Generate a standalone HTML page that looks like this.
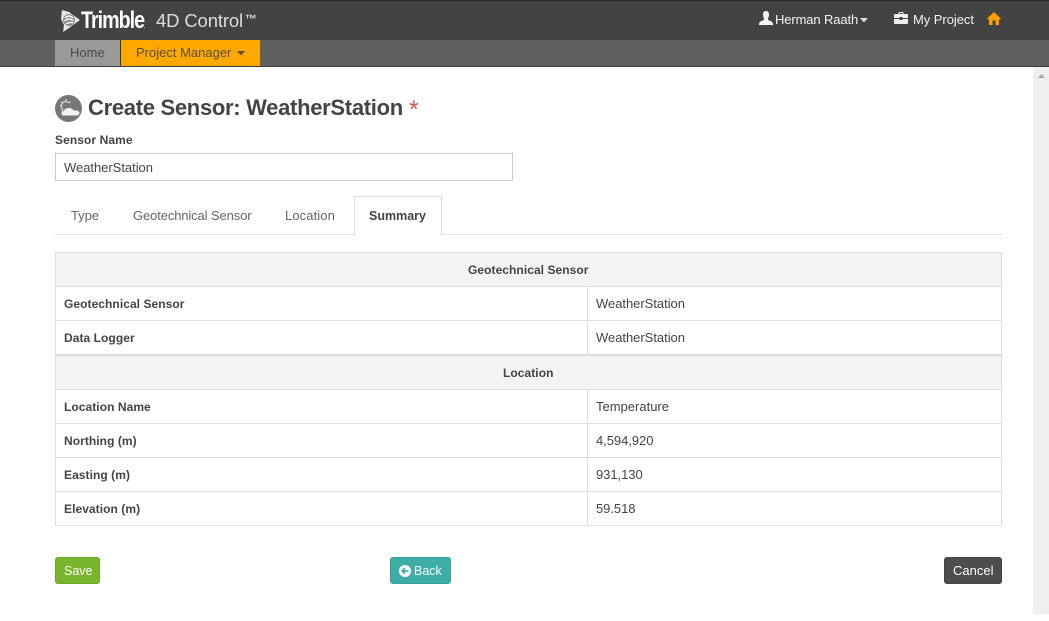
<!DOCTYPE html>
<html><head><meta charset="utf-8"><style>
html,body{margin:0;padding:0;width:1049px;height:621px;overflow:hidden;background:#fff;font-family:"Liberation Sans",sans-serif;color:#444;font-size:13px}
.a{position:absolute;white-space:nowrap}
.b{font-weight:bold}
.line{position:absolute;background:#ddd}
.t{position:absolute;white-space:nowrap;line-height:16px}
</style></head><body>
<div class="a" style="left:0;top:0;width:1049px;height:40px;background:#434343;border-top:1px solid #2a2a2a;box-sizing:border-box"></div>
<div class="a" style="left:0;top:40px;width:1049px;height:26px;background:#606060"></div>
<div class="a" style="left:0;top:66px;width:1049px;height:1px;background:#3a3a3a"></div>
<div class="a" style="left:1033px;top:67px;width:16px;height:547px;background:#efefef"></div>
<svg class="a" style="left:1037px;top:73px" width="10" height="6"><path d="M1 5L4.500 1L8 5Z" fill="#aaa"/></svg>

<svg class="a" style="left:60px;top:9px" width="21" height="24" viewBox="0 0 21 24"><path d="M2 1L9 3L20 11L9 19L3 23L4 16L1 10Z" fill="#e8e8e8"/><circle cx="9" cy="11" r="6" fill="#8a8a8a"/><path d="M5 9Q9 5 13 9M4.500 12Q9 8 13.500 12M6 15Q10 12.500 13 14" stroke="#fff" stroke-width="1.300" fill="none"/></svg>
<div class="a b" style="left:81px;top:8px;font-size:24px;line-height:26px;color:#fff;letter-spacing:-1.2px;transform:scaleX(.82);transform-origin:left">Trimble<span style="font-size:5px;letter-spacing:0">.</span></div>
<div class="a" style="left:156px;top:9px;font-size:18.500px;line-height:24px;color:#ddd;letter-spacing:-.15px">4D Control<span style="font-size:12px;position:relative;top:-4px;margin-left:2px;font-weight:bold">™</span></div>

<svg class="a" style="left:759px;top:11px" width="14" height="14" viewBox="0 0 14 14"><path d="M7 0C9.300 0 10.300 2 10 4.500C9.800 6 9.200 7 8.800 7.700C8.800 9 10 9.400 11.500 10C13 10.600 14 11.300 14 14H0C0 11.300 1 10.600 2.500 10C4 9.400 5.200 9 5.200 7.700C4.800 7 4.200 6 4 4.500C3.700 2 4.700 0 7 0Z" fill="#f5f5f5"/></svg>
<div class="t" style="left:775px;top:12px;color:#f2f2f2;letter-spacing:-.12px">Herman Raath</div>
<svg class="a" style="left:860px;top:18px" width="8" height="5"><path d="M0 0H8L4 4.500Z" fill="#ddd"/></svg>
<svg class="a" style="left:894px;top:12px" width="14" height="12" viewBox="0 0 14 12"><path d="M4.500 2V.8Q4.500 0 5.300 0H8.700Q9.500 0 9.500 .8V2H8.500V1H5.500V2Z" fill="#eee"/><path d="M1 2H13Q14 2 14 3V6H8.500V5H5.500V6H0V3Q0 2 1 2ZM0 7H5.500V8H8.500V7H14V11Q14 12 13 12H1Q0 12 0 11Z" fill="#eee"/></svg>
<div class="t" style="left:913px;top:12px;color:#f2f2f2;letter-spacing:-.05px">My Project</div>
<svg class="a" style="left:987px;top:12px" width="14" height="13" viewBox="0 0 14 13"><path d="M7 0L14 6.800L13 7.500H12V13H8.500V8.500H5.500V13H2V7.500H1L0 6.800Z" fill="#ff9f00"/></svg>

<div class="a" style="left:55px;top:40px;width:65px;height:26px;background:#999"></div>
<div class="t" style="left:70px;top:45px;color:#4a4a4a">Home</div>
<div class="a" style="left:120px;top:40px;width:1px;height:26px;background:#333"></div>
<div class="a" style="left:121px;top:40px;width:139px;height:26px;background:#ffa900"></div>
<div class="t" style="left:136px;top:45px;color:#5a5030">Project Manager</div>
<svg class="a" style="left:237px;top:51px" width="8" height="5"><path d="M0 0H8L4 4.500Z" fill="#5a5030"/></svg>

<svg class="a" style="left:55px;top:95px" width="27" height="27" viewBox="0 0 27 27"><circle cx="13.500" cy="13.500" r="13.500" fill="#777"/><path d="M11 4V6M5 11H7M6.500 6.500L8 8M15.500 6.500L14 8M6.500 15.500L8 14" stroke="#ddd" stroke-width="1.200"/><path d="M7.500 14A4 4 0 0 1 14 8" fill="none" stroke="#ddd" stroke-width="1.200"/><path d="M9 20.500Q6.500 20.500 6.500 18Q6.500 16 9 15.700Q10 13 14 13Q17.500 13 18.500 15.500Q24 15 24.500 18Q24.500 20.500 21.500 20.500Z" fill="#f2f2f2"/></svg>
<div class="a b" style="left:88px;top:94px;font-size:22px;line-height:27px;color:#444;letter-spacing:-.3px">Create Sensor: WeatherStation</div>
<div class="a" style="left:409px;top:97px;font-size:25px;line-height:27px;color:#d9534f">*</div>

<div class="t b" style="left:55px;top:132px;font-size:12px;letter-spacing:.08px">Sensor Name</div>
<div class="a" style="left:55px;top:153px;width:458px;height:28px;border:1px solid #ccc;box-sizing:border-box"></div>
<div class="t" style="left:64px;top:160px;letter-spacing:-.03px">WeatherStation</div>

<div class="t" style="left:71px;top:208px;color:#666;letter-spacing:-.05px">Type</div>
<div class="t" style="left:133px;top:208px;color:#666;letter-spacing:-.12px">Geotechnical Sensor</div>
<div class="t" style="left:285px;top:208px;color:#666;letter-spacing:.1px">Location</div>
<div class="line" style="left:55px;top:234px;width:947px;height:1px"></div>
<div class="a" style="left:354px;top:196px;width:88px;height:39px;background:#fff;border:1px solid #ddd;border-bottom:0;box-sizing:border-box"></div>
<div class="t b" style="left:369px;top:208px;font-size:12.500px">Summary</div>

<div class="a" style="left:56px;top:253px;width:945px;height:33px;background:#f3f3f3"></div>
<div class="a" style="left:56px;top:356px;width:945px;height:33px;background:#f3f3f3"></div>
<div class="line" style="left:55px;top:252px;width:947px;height:1px"></div>
<div class="line" style="left:55px;top:286px;width:947px;height:1px"></div>
<div class="line" style="left:55px;top:320px;width:947px;height:1px"></div>
<div class="line" style="left:55px;top:354px;width:947px;height:2px"></div>
<div class="line" style="left:55px;top:389px;width:947px;height:1px"></div>
<div class="line" style="left:55px;top:423px;width:947px;height:1px"></div>
<div class="line" style="left:55px;top:457px;width:947px;height:1px"></div>
<div class="line" style="left:55px;top:491px;width:947px;height:1px"></div>
<div class="line" style="left:55px;top:525px;width:947px;height:1px"></div>
<div class="line" style="left:55px;top:252px;width:1px;height:274px"></div>
<div class="line" style="left:1001px;top:252px;width:1px;height:274px"></div>
<div class="line" style="left:587px;top:287px;width:1px;height:68px"></div>
<div class="line" style="left:587px;top:390px;width:1px;height:136px"></div>

<div class="t b" style="left:468px;top:262px;font-size:12px;letter-spacing:.06px">Geotechnical Sensor</div>
<div class="t b" style="left:64px;top:296px;font-size:12px;letter-spacing:.06px">Geotechnical Sensor</div>
<div class="t" style="left:596px;top:296px;letter-spacing:-.03px">WeatherStation</div>
<div class="t b" style="left:64px;top:330px;font-size:12px;letter-spacing:.06px">Data Logger</div>
<div class="t" style="left:596px;top:330px;letter-spacing:-.03px">WeatherStation</div>
<div class="t b" style="left:503px;top:365px;font-size:12px;letter-spacing:.06px">Location</div>
<div class="t b" style="left:64px;top:399px;font-size:12px;letter-spacing:.06px">Location Name</div>
<div class="t" style="left:596px;top:399px">Temperature</div>
<div class="t b" style="left:64px;top:433px;font-size:12px;letter-spacing:.06px">Northing (m)</div>
<div class="t" style="left:596px;top:433px;letter-spacing:-.05px">4,594,920</div>
<div class="t b" style="left:64px;top:467px;font-size:12px;letter-spacing:.06px">Easting (m)</div>
<div class="t" style="left:596px;top:467px;letter-spacing:-.05px">931,130</div>
<div class="t b" style="left:64px;top:501px;font-size:12px;letter-spacing:.06px">Elevation (m)</div>
<div class="t" style="left:596px;top:501px;letter-spacing:-.05px">59.518</div>

<div class="a" style="left:55px;top:557px;width:45px;height:27px;background:#7ab62d;border:1px solid #6fa528;border-radius:3px;box-sizing:border-box"></div>
<div class="t" style="left:64px;top:563px;color:#fff;font-size:12.500px">Save</div>
<div class="a" style="left:390px;top:557px;width:61px;height:27px;background:#3eada7;border:1px solid #37a09a;border-radius:3px;box-sizing:border-box"></div>
<svg class="a" style="left:399px;top:565px" width="12" height="12" viewBox="0 0 12 12"><circle cx="6" cy="6" r="6" fill="#fff"/><path d="M9.500 6H3.500M6 3.200L3.200 6L6 8.800" stroke="#3eada7" stroke-width="1.800" fill="none"/></svg>
<div class="t" style="left:414px;top:563px;color:#fff;font-size:12.500px">Back</div>
<div class="a" style="left:944px;top:557px;width:58px;height:27px;background:#4d4d4d;border:1px solid #444;border-radius:3px;box-sizing:border-box"></div>
<div class="t" style="left:953px;top:563px;color:#fff">Cancel</div>
</body></html>
